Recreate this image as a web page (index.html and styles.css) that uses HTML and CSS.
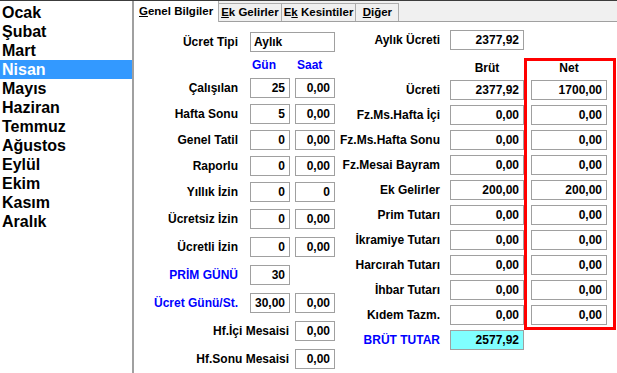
FILE: index.html
```html
<!DOCTYPE html>
<html lang="tr">
<head>
  <meta charset="UTF-8">
  <title>Bordro - Nisan</title>
  <link rel="stylesheet" href="styles.css">
</head>
<body>

<div class="window">
  <ul class="months">
    <li>Ocak</li>
    <li>Şubat</li>
    <li>Mart</li>
    <li class="selected">Nisan</li>
    <li>Mayıs</li>
    <li>Haziran</li>
    <li>Temmuz</li>
    <li>Ağustos</li>
    <li>Eylül</li>
    <li>Ekim</li>
    <li>Kasım</li>
    <li>Aralık</li>
  </ul>

  <div class="main">
    <div class="tabs">
      <div class="tab active"><u>G</u>enel Bilgiler</div>
      <div class="tab"><u>E</u>k Gelirler</div>
      <div class="tab">E<u>k</u> Kesintiler</div>
      <div class="tab"><u>D</u>iğer</div>
    </div>

    <div class="panel">
      <!-- gün / saat -->
      <div class="form-left">
        <div class="group">
          <div class="row"><label>Ücret Tipi</label><div class="field text span2">Aylık</div></div>
          <div class="row head"><span></span><span class="blue">Gün</span><span class="blue">Saat</span></div>
          <div class="row"><label>Çalışılan</label><div class="field">25</div><div class="field">0,00</div></div>
          <div class="row"><label>Hafta Sonu</label><div class="field">5</div><div class="field">0,00</div></div>
          <div class="row"><label>Genel Tatil</label><div class="field">0</div><div class="field">0,00</div></div>
          <div class="row"><label>Raporlu</label><div class="field">0</div><div class="field">0,00</div></div>
          <div class="row"><label>Yıllık İzin</label><div class="field">0</div><div class="field">0</div></div>
        </div>
        <div class="group loose">
          <div class="row"><label>Ücretsiz İzin</label><div class="field">0</div><div class="field">0,00</div></div>
          <div class="row"><label>Ücretli İzin</label><div class="field">0</div><div class="field">0,00</div></div>
          <div class="row"><label class="blue">PRİM GÜNÜ</label><div class="field">30</div></div>
          <div class="row"><label class="blue">Ücret Günü/St.</label><div class="field">30,00</div><div class="field">0,00</div></div>
          <div class="row"><label class="span2">Hf.İçi Mesaisi</label><div class="field">0,00</div></div>
          <div class="row"><label class="span2">Hf.Sonu Mesaisi</label><div class="field">0,00</div></div>
        </div>
      </div>

      <!-- tutarlar -->
      <div class="form-right">
        <div class="brut-grid">
          <label>Aylık Ücreti</label><div class="field">2377,92</div>
          <span></span><span class="col-head">Brüt</span>
          <label>Ücreti</label><div class="field">2377,92</div>
          <label>Fz.Ms.Hafta İçi</label><div class="field">0,00</div>
          <label>Fz.Ms.Hafta Sonu</label><div class="field">0,00</div>
          <label>Fz.Mesai Bayram</label><div class="field">0,00</div>
          <label>Ek Gelirler</label><div class="field">200,00</div>
          <label>Prim Tutarı</label><div class="field">0,00</div>
          <label>İkramiye Tutarı</label><div class="field">0,00</div>
          <label>Harcırah Tutarı</label><div class="field">0,00</div>
          <label>İhbar Tutarı</label><div class="field">0,00</div>
          <label>Kıdem Tazm.</label><div class="field">0,00</div>
          <label class="blue">BRÜT TUTAR</label><div class="field total">2577,92</div>
        </div>

        <div class="net-box">
          <span class="col-head">Net</span>
          <div class="field">1700,00</div>
          <div class="field">0,00</div>
          <div class="field">0,00</div>
          <div class="field">0,00</div>
          <div class="field">200,00</div>
          <div class="field">0,00</div>
          <div class="field">0,00</div>
          <div class="field">0,00</div>
          <div class="field">0,00</div>
          <div class="field">0,00</div>
        </div>
      </div>
    </div>
  </div>
</div>

</body>
</html>
```

FILE: styles.css
```css
:root {
  --line: #a0a0a0;
  --tab-bg: #f0f0f0;
  --select: #3399ff;
  --blue: #0000ff;
  --mark: #ff0000;
}
* { box-sizing: border-box; }
body {
  margin: 0;
  background: #fff;
  color: #000;
  font-family: "Liberation Sans", Arial, sans-serif;
  font-weight: bold;
  font-size: 12px;
}
.window { display: flex; width: 617px; height: 373px; border-top: 1px solid #3c3c3c; overflow: hidden; }

.months { list-style: none; margin: 0; padding: 2px 0 0; width: 134px; border-right: 2px solid var(--line); font-size: 16px; line-height: 19px; }
.months li { padding-left: 2px; }
.months li.selected { background: var(--select); color: #fff; }

.main { flex: 1; display: flex; flex-direction: column; }

.tabs { display: flex; align-items: flex-start; height: 21px; background: var(--tab-bg); border-bottom: 1px solid var(--line); }
.tab {
  height: 18px;
  margin-top: 2px;
  min-width: 43px;
  padding: 0 2px;
  border: 1px solid #adadad;
  border-bottom: 0;
  border-left: 0;
  font-size: 11.5px;
  line-height: 17px;
  text-align: center;
  white-space: nowrap;
}
.tab.active { height: 21px; margin-top: 0; padding: 2px 5px 0; background: #fff; border-top: 0; position: relative; z-index: 1; }

.panel { display: flex; gap: 5px; padding: 8px 0 0 1px; }

.form-left { display: flex; flex-direction: column; gap: 7px; margin-top: 2px; width: 200px; }
.group { display: flex; flex-direction: column; gap: 6px; }
.group.loose { gap: 8px; }
.row { display: grid; grid-template-columns: 110px 40px 40px; column-gap: 5px; height: 20px; }
.row label { padding-right: 7px; }
.row label.span2 { grid-column: 1 / 3; padding-right: 1px; }
.row.head { height: 14px; line-height: 14px; }
.row.head span { padding-left: 2px; }

label { text-align: right; line-height: 20px; white-space: nowrap; }
.blue { color: var(--blue); }

.field {
  height: 20px;
  border: 1px solid var(--line);
  background: #fff;
  padding-right: 4px;
  line-height: 18px;
  text-align: right;
  white-space: nowrap;
}
.field.text { text-align: left; padding-left: 3px; }
.field.span2 { grid-column: 2 / 4; }
.field.total { background: #80ffff; }

.form-right { display: flex; align-items: flex-start; }
.brut-grid { display: grid; grid-template-columns: 110px 74px; grid-auto-rows: 20px; row-gap: 5px; }
.brut-grid label { padding-right: 10px; }
.col-head { align-self: end; line-height: 14px; text-align: center; }

.net-box {
  display: flex;
  flex-direction: column;
  gap: 5px;
  width: 92px;
  margin-top: 28px;
  padding: 0 6px 2px 4px;
  border: 3px solid var(--mark);
}
.net-box .col-head { align-self: stretch; height: 14px; }
```
